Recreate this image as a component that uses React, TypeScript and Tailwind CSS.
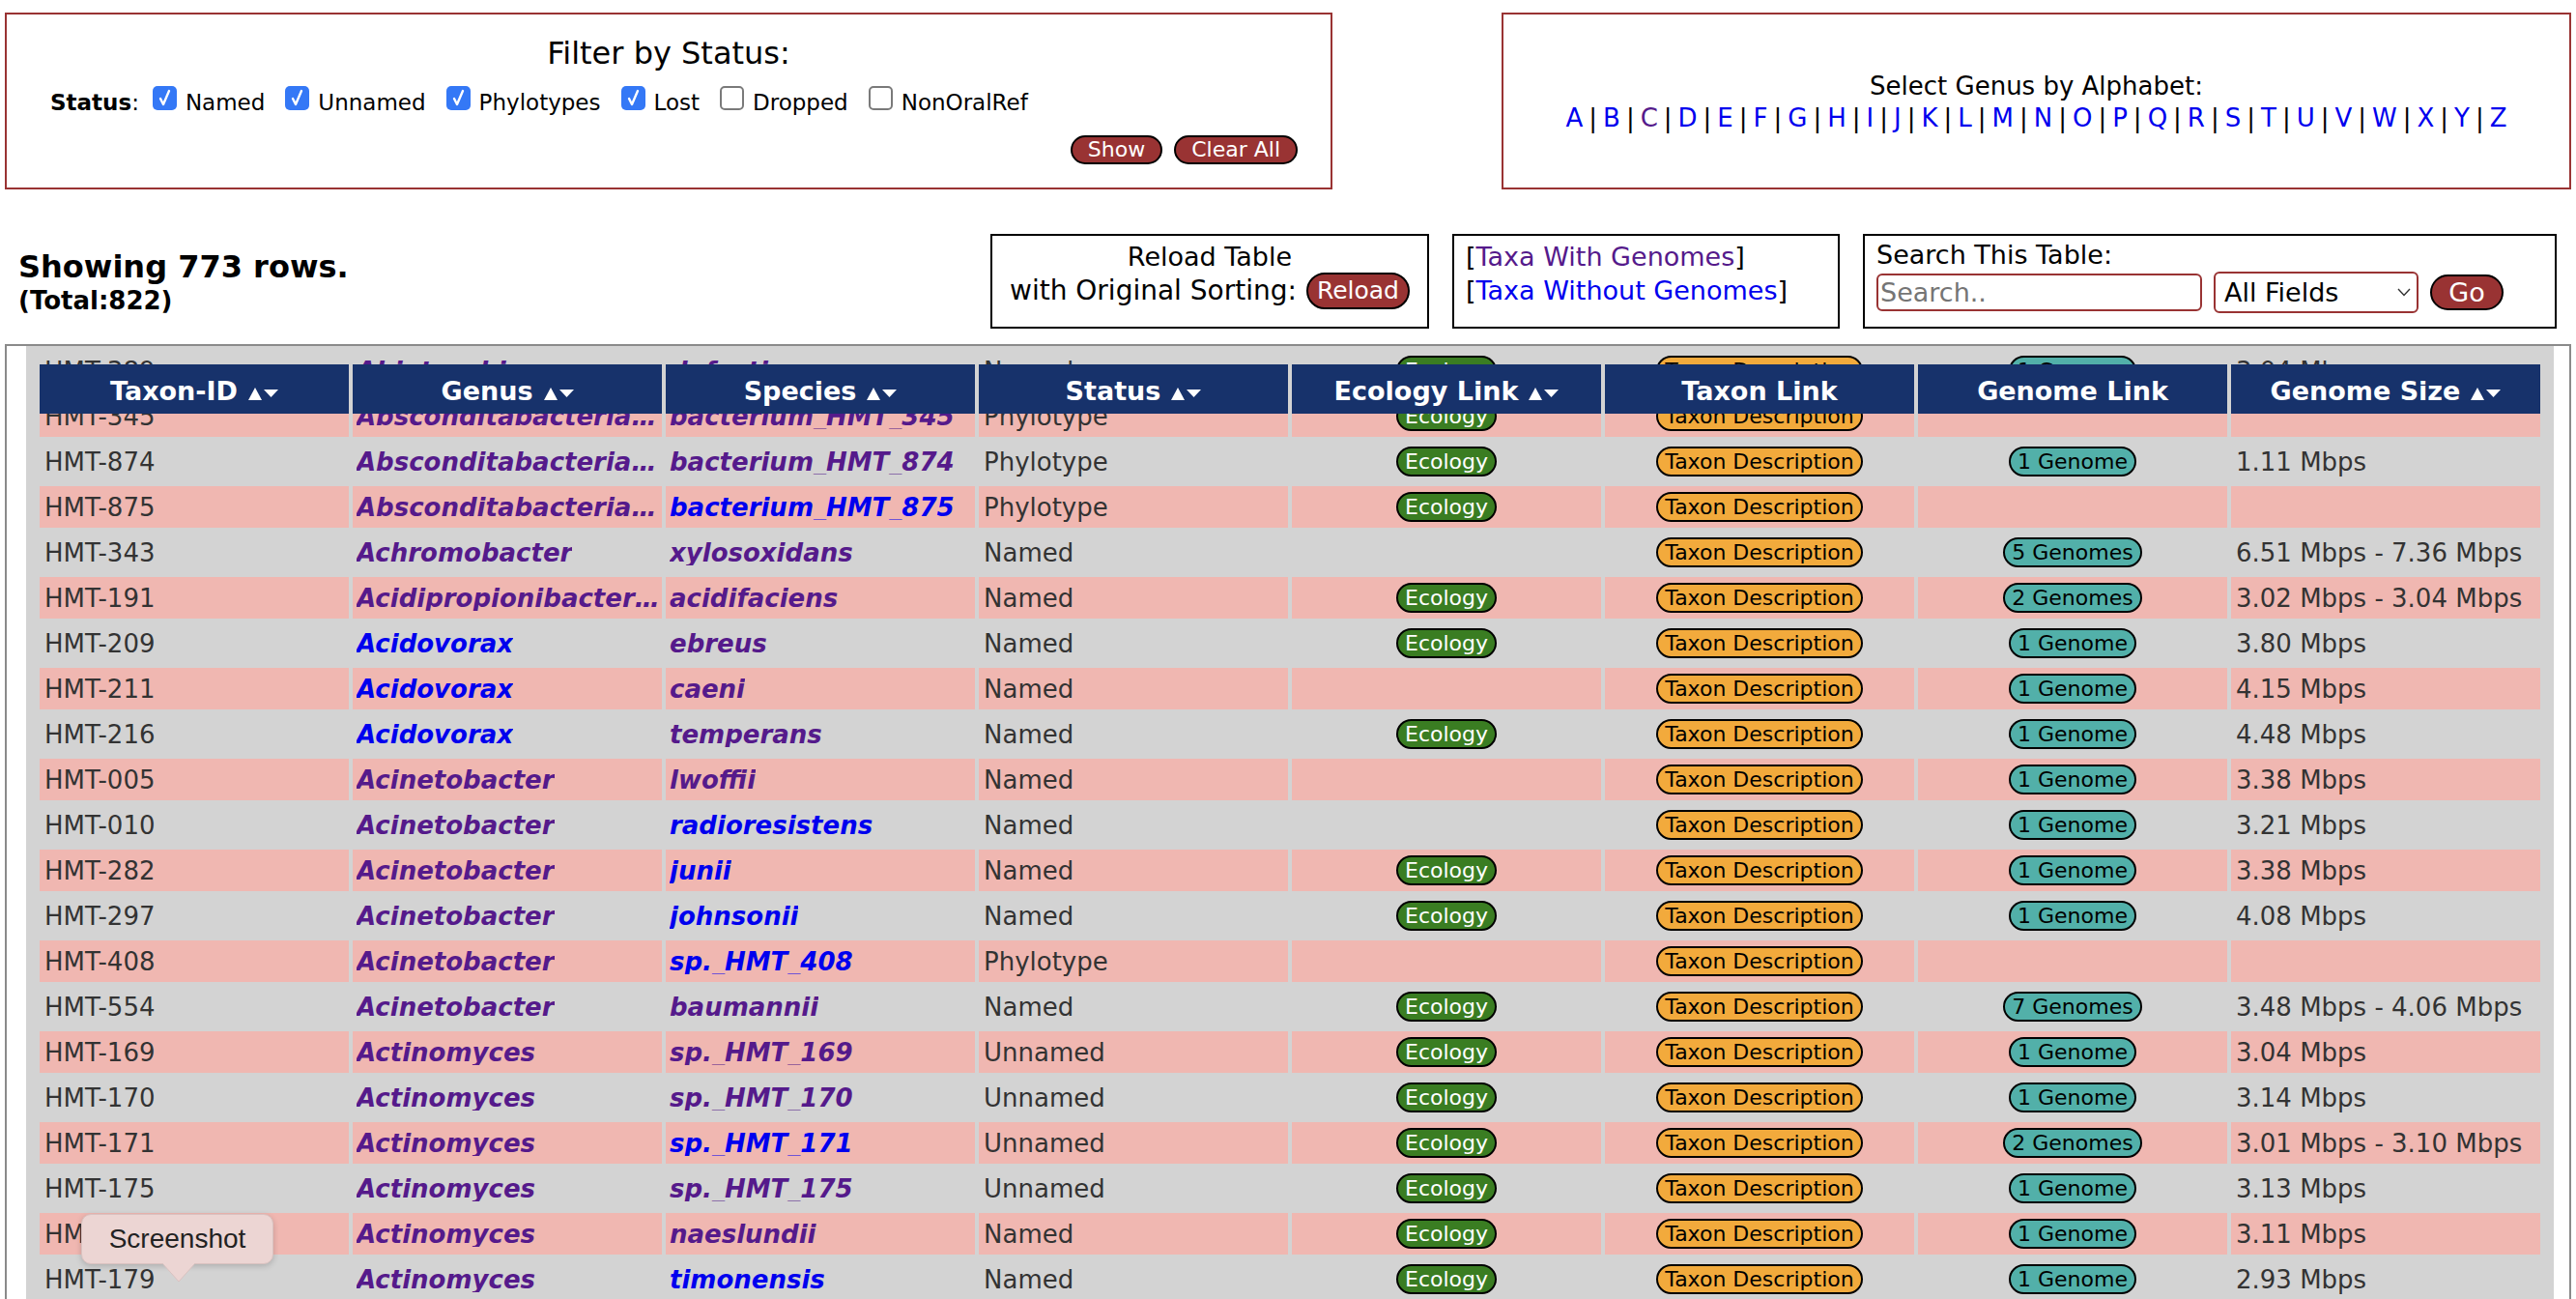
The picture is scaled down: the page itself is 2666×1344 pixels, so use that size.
import React from "react";

type Row = {
  id: string;
  genus: string;
  genusBlue?: boolean;
  species: string;
  speciesBlue?: boolean;
  status: string;
  eco: boolean;
  genomes: number;
  size: string;
};

const ABS = "Absconditabacteria (SR1) [G-1]";

const rows: Row[] = [
  { id: "HMT-389", genus: "Abiotrophia", species: "defectiva", status: "Named", eco: true, genomes: 1, size: "3.04 Mbps" },
  { id: "HMT-345", genus: ABS, species: "bacterium_HMT_345", status: "Phylotype", eco: true, genomes: 0, size: "" },
  { id: "HMT-874", genus: ABS, species: "bacterium_HMT_874", status: "Phylotype", eco: true, genomes: 1, size: "1.11 Mbps" },
  { id: "HMT-875", genus: ABS, species: "bacterium_HMT_875", speciesBlue: true, status: "Phylotype", eco: true, genomes: 0, size: "" },
  { id: "HMT-343", genus: "Achromobacter", species: "xylosoxidans", status: "Named", eco: false, genomes: 5, size: "6.51 Mbps - 7.36 Mbps" },
  { id: "HMT-191", genus: "Acidipropionibacterium", species: "acidifaciens", status: "Named", eco: true, genomes: 2, size: "3.02 Mbps - 3.04 Mbps" },
  { id: "HMT-209", genus: "Acidovorax", genusBlue: true, species: "ebreus", status: "Named", eco: true, genomes: 1, size: "3.80 Mbps" },
  { id: "HMT-211", genus: "Acidovorax", genusBlue: true, species: "caeni", status: "Named", eco: false, genomes: 1, size: "4.15 Mbps" },
  { id: "HMT-216", genus: "Acidovorax", genusBlue: true, species: "temperans", status: "Named", eco: true, genomes: 1, size: "4.48 Mbps" },
  { id: "HMT-005", genus: "Acinetobacter", species: "lwoffii", status: "Named", eco: false, genomes: 1, size: "3.38 Mbps" },
  { id: "HMT-010", genus: "Acinetobacter", species: "radioresistens", speciesBlue: true, status: "Named", eco: false, genomes: 1, size: "3.21 Mbps" },
  { id: "HMT-282", genus: "Acinetobacter", species: "junii", speciesBlue: true, status: "Named", eco: true, genomes: 1, size: "3.38 Mbps" },
  { id: "HMT-297", genus: "Acinetobacter", species: "johnsonii", speciesBlue: true, status: "Named", eco: true, genomes: 1, size: "4.08 Mbps" },
  { id: "HMT-408", genus: "Acinetobacter", species: "sp._HMT_408", speciesBlue: true, status: "Phylotype", eco: false, genomes: 0, size: "" },
  { id: "HMT-554", genus: "Acinetobacter", species: "baumannii", status: "Named", eco: true, genomes: 7, size: "3.48 Mbps - 4.06 Mbps" },
  { id: "HMT-169", genus: "Actinomyces", species: "sp._HMT_169", status: "Unnamed", eco: true, genomes: 1, size: "3.04 Mbps" },
  { id: "HMT-170", genus: "Actinomyces", species: "sp._HMT_170", status: "Unnamed", eco: true, genomes: 1, size: "3.14 Mbps" },
  { id: "HMT-171", genus: "Actinomyces", species: "sp._HMT_171", speciesBlue: true, status: "Unnamed", eco: true, genomes: 2, size: "3.01 Mbps - 3.10 Mbps" },
  { id: "HMT-175", genus: "Actinomyces", species: "sp._HMT_175", status: "Unnamed", eco: true, genomes: 1, size: "3.13 Mbps" },
  { id: "HMT-176", genus: "Actinomyces", species: "naeslundii", status: "Named", eco: true, genomes: 1, size: "3.11 Mbps" },
  { id: "HMT-179", genus: "Actinomyces", species: "timonensis", speciesBlue: true, status: "Named", eco: true, genomes: 1, size: "2.93 Mbps" },
  { id: "HMT-180", genus: "Actinomyces", species: "gerencseriae", status: "Named", eco: true, genomes: 1, size: "3.20 Mbps" },
];

const headers: { label: string; sort: boolean }[] = [
  { label: "Taxon-ID", sort: true },
  { label: "Genus", sort: true },
  { label: "Species", sort: true },
  { label: "Status", sort: true },
  { label: "Ecology Link", sort: true },
  { label: "Taxon Link", sort: false },
  { label: "Genome Link", sort: false },
  { label: "Genome Size", sort: true },
];

const letters = "ABCDEFGHIJKLMNOPQRSTUVWXYZ".split("");

function Check({ checked }: { checked: boolean }) {
  if (checked) {
    return (
      <span className="inline-flex h-[25px] w-[25px] items-center justify-center rounded-[5px] bg-[#3478f6]">
        <svg width="25" height="25" viewBox="0 0 25 25">
          <path d="M8 13 L11 19 L17 5" fill="none" stroke="white" strokeWidth="2.4" strokeLinecap="round" strokeLinejoin="round" />
        </svg>
      </span>
    );
  }
  return <span className="inline-block h-[25px] w-[25px] rounded-[5px] border-2 border-[#7a7a7a] bg-white" />;
}

function SortArrows() {
  return (
    <svg width="31" height="13" viewBox="0 0 31 13" className="ml-[11px] inline-block align-baseline">
      <polygon points="0,13 7,0 14,13" fill="white" />
      <polygon points="16,2 31,2 23.5,10" fill="white" />
    </svg>
  );
}

function Pill({ cls, children }: { cls: string; children: React.ReactNode }) {
  return (
    <span className={"inline-flex h-[31px] items-center whitespace-nowrap rounded-full border-2 border-black px-[7px] text-[22px] leading-none " + cls}>
      {children}
    </span>
  );
}

const statusItems: { label: string; checked: boolean; ml: string }[] = [
  { label: "Named", checked: true, ml: "ml-[14px]" },
  { label: "Unnamed", checked: true, ml: "ml-[21px]" },
  { label: "Phylotypes", checked: true, ml: "ml-[21px]" },
  { label: "Lost", checked: true, ml: "ml-[21px]" },
  { label: "Dropped", checked: false, ml: "ml-[21px]" },
  { label: "NonOralRef", checked: false, ml: "ml-[21px]" },
];

export default function App() {
  return (
    <div className="relative h-[1344px] w-[2666px] overflow-hidden bg-white font-['DejaVu_Sans',sans-serif] text-black">
      {/* Top row */}
      <div className="flex justify-between px-[5px] pt-[13px]">
        <div className="flex h-[183px] w-[1374px] flex-col border-2 border-[#993333] pt-[20px]">
          <div className="h-[40px] text-center text-[32px] leading-[40px]">Filter by Status:</div>
          <div className="mt-[14px] flex h-[30px] items-baseline pl-[45px] text-[23px] leading-[30px]">
            <span>
              <b>Status</b>:
            </span>
            {statusItems.map((s) => (
              <React.Fragment key={s.label}>
                <span className={s.ml + " mr-[9px] inline-flex"}>
                  <Check checked={s.checked} />
                </span>
                <span>{s.label}</span>
              </React.Fragment>
            ))}
          </div>
          <div className="mt-[21px] flex justify-end gap-[12px] pr-[34px]">
            <span className="flex h-[30px] items-center rounded-full border-2 border-black bg-[#993333] px-[16px] text-[22px] leading-none text-white">Show</span>
            <span className="flex h-[30px] items-center rounded-full border-2 border-black bg-[#993333] px-[16px] text-[22px] leading-none text-white">Clear All</span>
          </div>
        </div>
        <div className="flex h-[183px] w-[1107px] flex-col items-center border-2 border-[#993333] pt-[58px]">
          <div className="text-[26px] leading-[33px]">Select Genus by Alphabet:</div>
          <div className="flex text-[26px] leading-[33px]">
            {letters.map((l, i) => (
              <React.Fragment key={l}>
                {i > 0 && <span className="mx-[6px]">|</span>}
                <span className={l === "C" ? "text-[#551a8b]" : "text-[#0000ee]"}>{l}</span>
              </React.Fragment>
            ))}
          </div>
        </div>
      </div>

      {/* Middle row */}
      <div className="mt-[46px] flex items-start gap-[24px] pr-[20px]">
        <div className="flex-1 pl-[19px] pt-[15px] font-bold">
          <div className="text-[32px] leading-[38px]">Showing 773 rows.</div>
          <div className="text-[26px] leading-[32px]">(Total:822)</div>
        </div>
        <div className="flex h-[98px] w-[454px] flex-col items-center border-2 border-black pt-[4px] text-[27px] leading-[35px]">
          <div>Reload Table</div>
          <div className="flex h-[35px] items-center gap-[10px]">
            <span className="text-[28px]">with Original Sorting:</span>
            <span className="flex h-[38px] items-center rounded-full border-2 border-black bg-[#993333] px-[9px] text-[25px] leading-none text-white">Reload</span>
          </div>
        </div>
        <div className="h-[98px] w-[401px] border-2 border-black pl-[12px] pt-[4px] text-[27px] leading-[35px]">
          <div>
            [<span className="text-[#551a8b]">Taxa With Genomes</span>]
          </div>
          <div>
            [<span className="text-[#0000ee]">Taxa Without Genomes</span>]
          </div>
        </div>
        <div className="h-[98px] w-[718px] border-2 border-black pl-[12px] pt-[2px] text-[27px] leading-[35px]">
          <div>Search This Table:</div>
          <div className="flex h-[43px] items-center gap-[12px]">
            <input
              readOnly
              placeholder="Search.."
              className="h-[39px] w-[337px] rounded-[6px] border-2 border-[#993333] bg-white pl-[2px] text-[27px] leading-none outline-none placeholder:text-[#757575]"
            />
            <div className="flex h-[43px] w-[212px] items-center justify-between rounded-[6px] border-2 border-[#993333] bg-white pl-[9px] pr-[6px] text-[27px] leading-none">
              <span>All Fields</span>
              <svg width="14" height="9" viewBox="0 0 14 9">
                <polyline points="1,1 7,7.5 13,1" fill="none" stroke="#333" strokeWidth="1.4" />
              </svg>
            </div>
            <span className="flex h-[37px] w-[76px] items-center justify-center rounded-full border-2 border-black bg-[#993333] text-[27px] leading-none text-white">Go</span>
          </div>
        </div>
      </div>

      {/* Table */}
      <div className="mx-[5px] mt-[16px] h-[1100px] border-2 border-[#8a8a8a] bg-white pl-[20px] pr-[16px]">
        <div className="relative h-full overflow-hidden bg-[#d3d3d3]">
          <div className="flex flex-col gap-[4px] px-[14px] pt-[4px]">
            {rows.map((r, idx) => {
              const pink = idx % 2 === 1;
              const cellBg = pink ? "bg-[#f0b7b1]" : "";
              return (
                <div key={r.id} className="grid h-[43px] grid-cols-8 gap-x-[4px] text-[26px] leading-none text-[#333]">
                  <div className={"flex items-center pl-[5px] " + cellBg}>{r.id}</div>
                  <div className={"flex min-w-0 items-center pl-[4px] pr-[2px] " + cellBg}>
                    <span className={"truncate font-bold italic " + (r.genusBlue ? "text-[#0000ee]" : "text-[#551a8b]")}>{r.genus}</span>
                  </div>
                  <div className={"flex min-w-0 items-center pl-[4px] pr-[2px] " + cellBg}>
                    <span className={"truncate font-bold italic " + (r.speciesBlue ? "text-[#0000ee]" : "text-[#551a8b]")}>{r.species}</span>
                  </div>
                  <div className={"flex items-center pl-[5px] " + cellBg}>{r.status}</div>
                  <div className={"flex items-center justify-center " + cellBg}>
                    {r.eco && <Pill cls="bg-[#3a7d22] text-white">Ecology</Pill>}
                  </div>
                  <div className={"flex items-center justify-center " + cellBg}>
                    <Pill cls="bg-[#f2aa3c] text-black">Taxon Description</Pill>
                  </div>
                  <div className={"flex items-center justify-center " + cellBg}>
                    {r.genomes > 0 && (
                      <Pill cls="bg-[#52b0a9] text-black">
                        {r.genomes} {r.genomes === 1 ? "Genome" : "Genomes"}
                      </Pill>
                    )}
                  </div>
                  <div className={"flex items-center whitespace-nowrap pl-[5px] " + cellBg}>{r.size}</div>
                </div>
              );
            })}
          </div>
          {/* sticky header overlay */}
          <div className="absolute left-[14px] right-[14px] top-[19px] grid grid-cols-8 gap-x-[4px]">
            {headers.map((h) => (
              <div key={h.label} className="flex h-[51px] items-center justify-center bg-[#17326b] pt-[3px] text-[27px] font-bold leading-none text-white">
                <span className="whitespace-nowrap">
                  {h.label}
                  {h.sort && <SortArrows />}
                </span>
              </div>
            ))}
          </div>
        </div>
      </div>

      {/* Screenshot tooltip */}
      <div className="absolute left-[84px] top-[1256px]">
        <div className="flex h-[52px] w-[199px] items-center justify-center rounded-[10px] border border-[#d9c2c0] bg-[#ecd5d3] font-['Liberation_Sans',sans-serif] text-[28px] text-[#222] shadow-[0_2px_6px_rgba(0,0,0,0.18)]">
          Screenshot
        </div>
        <svg width="34" height="20" viewBox="0 0 34 20" className="absolute left-[84px] top-[51px]">
          <polygon points="0,0 34,0 17,19" fill="#ecd5d3" />
          <polyline points="0,0 17,19 34,0" fill="none" stroke="#d9c2c0" strokeWidth="1" />
        </svg>
      </div>
    </div>
  );
}
